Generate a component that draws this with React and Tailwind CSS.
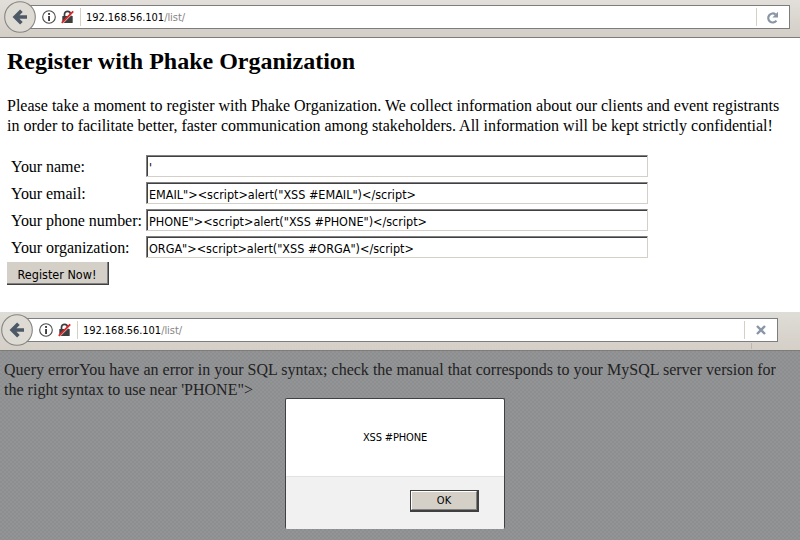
import React from "react";

const serif = "font-['Liberation_Serif',serif]";
const sans = "font-['DejaVu_Sans_Condensed','DejaVu_Sans',sans-serif] [font-stretch:condensed]";

function BackButton({ className }) {
  return (
    <svg className={"absolute size-8 " + className} viewBox="0 0 32 32">
      <circle cx="16" cy="16" r="15.3" fill="#dedbd5" stroke="#85847f" strokeWidth="1.1" />
      <path d="M10.5 16H23M17.4 9.8L11.2 16L17.4 22.2" fill="none" stroke="#4d5966" strokeWidth="3.7" />
    </svg>
  );
}

function SecurityIcons() {
  return (
    <>
      <svg className="size-[14px] shrink-0" viewBox="0 0 14 14">
        <circle cx="7" cy="7" r="6.3" fill="none" stroke="#4a4a4a" strokeWidth="1.1" />
        <rect x="6.1" y="3" width="1.9" height="1.9" fill="#3c3c3c" />
        <path d="M7.05 6V11" fill="none" stroke="#3c3c3c" strokeWidth="1.9" />
      </svg>
      <svg className="ml-[5px] h-[14px] w-[13px] shrink-0" viewBox="0 0 13 14">
        <path d="M3.5 7V4.3a3 3 0 0 1 6 0V7" fill="none" stroke="#3d3d3d" strokeWidth="1.7" />
        <rect x="1.3" y="6" width="10.4" height="7" rx="0.6" fill="#3d3d3d" />
        <path d="M1.7 13.5L12.8 2.4" stroke="#fff" strokeWidth="1" />
        <path d="M0.8 12.8L12.2 1.4" stroke="#e02626" strokeWidth="1.9" />
      </svg>
    </>
  );
}

function AddressBar({ second }) {
  return (
    <header
      className={
        "relative box-border shrink-0 border-b border-[#7d7c79] bg-linear-to-b " +
        (second
          ? "h-[39px] from-[#dfddd7] to-[#d4cfc7] pt-[6px] pl-4"
          : "h-[38px] from-[#e2dfda] to-[#d3cec6] pt-[5px] pl-[19px]")
      }
    >
      <div
        className={
          "flex h-6 items-center border border-[#7d7d7d] bg-white pl-[22px] " +
          (second ? "w-[762px]" : "w-[771px]")
        }
      >
        <SecurityIcons />
        <div className="ml-[6px] h-[18px] w-px bg-[#d5d0c4]" />
        <div className={"ml-[5px] flex-1 pt-[2px] text-[11px] leading-[22px] whitespace-pre text-black " + sans}>
          <span className="tracking-[-0.04px]">192.168.56.101</span>
          <span className="tracking-[-0.05px] text-[#858585]">/list/</span>
        </div>
        <div className="h-[18px] w-px bg-[#d5d0c4]" />
        {second ? (
          <svg className="mr-[11px] ml-[11px] size-[10px]" viewBox="0 0 10 10">
            <path d="M1 1L9 9M9 1L1 9" stroke="#8996a6" strokeWidth="2.4" />
          </svg>
        ) : (
          <svg className="mr-[10px] ml-[9px] size-[13px]" viewBox="0 0 13 13">
            <path d="M10.4 9.6A4.5 4.5 0 1 1 9.6 3.5" fill="none" stroke="#8996a6" strokeWidth="2.2" />
            <path d="M12 .8V6.5H6.4Z" fill="#8996a6" />
          </svg>
        )}
      </div>
      {second && <div className="ml-[735px] mt-px h-[6px] w-px bg-[#bcb8ae]" />}
      <BackButton className={second ? "top-[2px] left-[1px]" : "top-[1px] left-[4px]"} />
    </header>
  );
}

const fields = [
  ["Your name:", "'"],
  ["Your email:", 'EMAIL"><script>alert("XSS #EMAIL")</script>'],
  ["Your phone number:", 'PHONE"><script>alert("XSS #PHONE")</script>'],
  ["Your organization:", 'ORGA"><script>alert("XSS #ORGA")</script>'],
];

export default function App() {
  return (
    <div className="flex h-[540px] w-[800px] flex-col overflow-hidden bg-white text-black">
      <AddressBar />
      <main className={"h-[274px] shrink-0 pt-[9px] pl-[7px] text-[16px] whitespace-nowrap " + serif}>
        <h2 className="text-[24px] leading-[28px] font-bold">Register with Phake Organization</h2>
        <div className="mt-[21px] leading-5">
          <p>Please take a moment to register with Phake Organization. We collect information about our clients and event registrants</p>
          <p>in order to facilitate better, faster communication among stakeholders. All information will be kept strictly confidential!</p>
        </div>
        <form className="mt-[19px]">
          <div className="flex flex-col gap-[5px] pl-[4px]">
            {fields.map(([label, value]) => (
              <div key={label} className="flex h-[22px] items-center">
                <label className="w-[135px] pt-[2px] tracking-[-0.05px]">{label}</label>
                <div className="h-[22px] w-[502px] border border-t-[#808080] border-r-[#d4d0c8] border-b-[#d4d0c8] border-l-[#808080]">
                  <div
                    className={
                      "h-5 border-t border-l border-[#404040] pl-[1px] text-[12.5px] leading-[21px] " + sans
                    }
                  >
                    {value}
                  </div>
                </div>
              </div>
            ))}
          </div>
          <button
            type="button"
            className={
              "mt-[4px] block h-[23px] w-[102px] border-r border-b border-[#404040] text-[12.5px] " + sans
            }
          >
            <span className="block h-[22px] border-r border-b border-[#808080] bg-[#d4d0c8] pt-[2px] leading-[22px]">
              Register Now!
            </span>
          </button>
        </form>
      </main>
      <AddressBar second />
      <section className="relative flex-1 bg-[#919191] bg-[repeating-conic-gradient(#8c8f92_0_25%,#949494_0_50%)] bg-size-[4px_4px]">
        <div
          className={"pt-[9px] pl-[4px] text-[16px] leading-5 tracking-[0.01px] whitespace-nowrap text-[#222] " + serif}
        >
          <p>Query errorYou have an error in your SQL syntax; check the manual that corresponds to your MySQL server version for</p>
          <p>the right syntax to use near 'PHONE"&gt;</p>
        </div>
        <div
          role="dialog"
          className={
            "absolute top-[47px] left-[285px] flex h-[131px] w-[220px] flex-col overflow-hidden rounded-[2px] border border-b-0 border-[#404142] bg-white text-[11px] " +
            sans
          }
        >
          <div className="flex h-[78px] items-center justify-center border-b border-[#e2e2e2] pt-[2px] tracking-[-0.15px]">
            XSS #PHONE
          </div>
          <div className="flex flex-1 items-start justify-end bg-[#f1f1f1] pt-[13px] pr-[25px]">
            <button type="button" className="h-[22px] w-[69px] border border-r-2 border-b-2 border-[#404040]">
              <span className="block h-[19px] border border-t-white border-r-[#808080] border-b-[#808080] border-l-white bg-[#d4d0c8] leading-[17px]">
                OK
              </span>
            </button>
          </div>
        </div>
      </section>
    </div>
  );
}
